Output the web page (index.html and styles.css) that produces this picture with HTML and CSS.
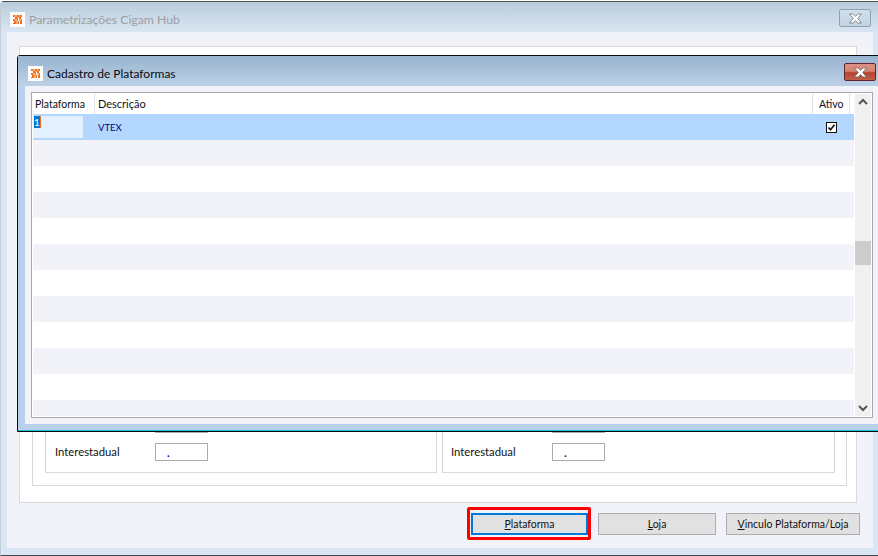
FILE: index.html
```html
<!DOCTYPE html>
<html lang="pt">
<head>
<meta charset="utf-8">
<title>Cadastro de Plataformas</title>
<link rel="stylesheet" href="styles.css">
</head>
<body>
<svg class="defs" width="0" height="0" aria-hidden="true">
  <symbol id="logo" viewBox="0 0 15 15">
    <rect width="15" height="15" fill="#fdfdfd"/>
    <path d="M3 3h2v2H3zM7 3h2v2H7zM10 3h2v2h-2zM5 5h2v2H5zM9 5h2v2H9zM3 7h2v2H3zM7 6h1v3H7zM11 7h1v2h-1zM4 9h2v3H4zM8 9h1v3H8zM10 9h2v3h-2zM3 11h1v1H3z" fill="#f2701e"/>
    <path d="M5 3h2v2H5zM9 3h1v2H9zM7 5h2v1H7zM5 7h2v2H5zM9 7h2v2H9zM6 9h2v3H6z" fill="#f9b27e"/>
  </symbol>
  <symbol id="closex" viewBox="0 0 15 11">
    <path d="M1.5 1h3.6L7.5 3.4 9.900 1h3.600L9.700 5.500l3.800 4.500H9.900L7.500 7.600 5.100 10H1.500l3.800-4.500z" fill="#fff" stroke="#59606a" stroke-width=".9" stroke-opacity=".75"/>
  </symbol>
</svg>

<section class="window back">
  <header class="back-title">
    <svg class="logo"><use href="#logo"/></svg>
    <span class="back-caption">Parametrizações Cigam Hub</span>
    <span class="close close-idle"><svg class="close-x"><use href="#closex"/></svg></span>
  </header>
  <div class="back-client">
    <div class="panel-a">
      <div class="panel-b">
        <div class="box">
          <div class="field"><span class="field-label"></span><span class="input"></span></div>
          <div class="field"><span class="field-label">Interestadual</span><span class="input">.</span></div>
        </div>
        <div class="box">
          <div class="field"><span class="field-label"></span><span class="input"></span></div>
          <div class="field"><span class="field-label">Interestadual</span><span class="input">.</span></div>
        </div>
      </div>
    </div>
    <div class="actions">
      <button class="btn btn-plataforma" type="button"><u>P</u>lataforma</button>
      <button class="btn btn-loja" type="button"><u>L</u>oja</button>
      <button class="btn btn-vinculo" type="button"><u>V</u>inculo Plataforma/Loja</button>
    </div>
  </div>
</section>

<section class="window front">
  <header class="front-title">
    <svg class="logo"><use href="#logo"/></svg>
    <span class="front-caption">Cadastro de Plataformas</span>
    <span class="close close-hot"><svg class="close-x"><use href="#closex"/></svg></span>
  </header>
  <div class="front-client">
    <div class="grid">
      <div class="table">
        <div class="thead">
          <span class="th th-plat">Plataforma</span>
          <span class="th th-desc">Descrição</span>
          <span class="th th-ativo">Ativo</span>
        </div>
        <div class="rows">
          <div class="row selected">
            <span class="cell-plat"><span class="cell-edit"><span class="sel">1</span></span></span>
            <span class="cell-desc">VTEX</span>
            <span class="cell-ativo">
              <svg class="check" viewBox="0 0 11 11"><rect x=".5" y=".5" width="10" height="10" fill="#fff" stroke="#111"/><path d="M2.500 5.500l2 2.200 4-5" fill="none" stroke="#111" stroke-width="1.700"/></svg>
            </span>
          </div>
          <div class="row alt"></div><div class="row"></div>
          <div class="row alt"></div><div class="row"></div>
          <div class="row alt"></div><div class="row"></div>
          <div class="row alt"></div><div class="row"></div>
          <div class="row alt"></div><div class="row"></div>
          <div class="row alt"></div>
        </div>
      </div>
      <div class="scrollbar">
        <svg class="arrow" viewBox="0 0 16 16"><path d="M4 10l4-4 4 4" fill="none" stroke="#555" stroke-width="2"/></svg>
        <div class="thumb"></div>
        <svg class="arrow arrow-down" viewBox="0 0 16 16"><path d="M4 6l4 4 4-4" fill="none" stroke="#555" stroke-width="2"/></svg>
      </div>
    </div>
  </div>
</section>
</body>
</html>
```
FILE: styles.css
```css
* { box-sizing: border-box; }
html, body { margin: 0; padding: 0; }
body {
  position: relative;
  width: 878px;
  height: 556px;
  overflow: hidden;
  background: #fff;
  font-family: Lato, "Open Sans", "Liberation Sans", sans-serif;
  font-size: 11px;
  color: #000;
}
.defs { position: absolute; }
.window { position: absolute; display: flex; flex-direction: column; }
.logo { display: block; width: 15px; height: 15px; flex: none; }

/* back window */
.back {
  left: 0; top: 1px; width: 878px; height: 555px;
  background: #d9e6f3;
  border-top: 1px solid #4d5154;
  border-bottom: 1px solid #44484c;
  border-left: 1px solid #c3ccd4;
  border-top-left-radius: 4px;
}
.back-title {
  display: flex; align-items: center; flex: none;
  height: 30px;
  padding: 5px 7px 0 9px;
  background: linear-gradient(#b9ccdc, #d9e6f2);
}
.back-caption { margin-left: 4px; font-size: 12.250px; color: #9c9fa3; flex: 1; }
.close {
  display: flex; align-items: center; justify-content: center;
  width: 32px; height: 18px; border-radius: 2px; flex: none;
}
.close-idle { border: 1px solid #8da2b6; background: linear-gradient(#d2dfe9, #c2d3e1); margin-top: -3px; }
.close-hot {
  border: 1px solid #5e2430;
  background: linear-gradient(#dc9184 0, #d58272 45%, #b5422c 55%, #c2604a 100%);
  margin-top: -3px;
}
.close-x { width: 15px; height: 11px; }
.back-client {
  flex: 1; display: flex; flex-direction: column; min-height: 0;
  margin: 0 5px 7px 6px;
  padding: 14px 13px 13px 12px;
  background: #f1f3f9;
}
.panel-a {
  flex: 1; display: flex; min-height: 0;
  margin-right: 3px;
  padding: 13px 9px 16px 12px;
  background: #fff;
  border: 1px solid #d9d9d9;
}
.panel-b {
  flex: 1; display: flex; gap: 5px;
  padding: 13px 11px 12px 12px;
  border: 1px solid #d9d9d9;
}
.box {
  display: flex; flex-direction: column; justify-content: flex-end; gap: 10px;
  padding: 0 9px 11px;
  border: 1px solid #d9d9d9;
}
.box:first-child { width: 392px; }
.box:last-child { width: 393px; padding-left: 8px; }
.box:last-child .field-label { width: 101px; }
.field { display: flex; align-items: center; }
.field-label { width: 100px; padding-bottom: 2px; font-size: 11.300px; color: #111; }
.input {
  display: block; width: 53px; height: 18px;
  padding-left: 11px;
  border: 1px solid #ababab;
  background: #fff;
  color: #0000c8; font-size: 11px; line-height: 17px; font-weight: 700;
}
.actions { display: flex; gap: 10px; justify-content: flex-end; margin-top: 10px; flex: none; }
.btn {
  height: 22px; padding: 0 0 1px;
  background: #e1e1e1; border: 1px solid #adadad;
  font: inherit; font-size: 10.500px; color: #111;
}
.btn-plataforma { position: relative; width: 117px; border: 2px solid #0078d7; }
.btn-plataforma::after {
  content: ""; position: absolute;
  inset: -8px -5px -7px -6px;
  border: 3px solid #f00; border-radius: 2px;
}
.btn-loja { width: 118px; }
.btn-vinculo { width: 134px; }

/* front window */
.front {
  left: 17px; top: 55px; width: 870px; height: 377px;
  background: #b9d0ea;
  border: 1px solid #0a0a0a;
  border-top-left-radius: 3px;
  padding-bottom: 7px;
}
.front::after {
  content: ""; position: absolute; left: 0; right: 0; bottom: 0; height: 1px;
  background: #1fc4e0;
}
.front-title {
  display: flex; align-items: center; flex: none;
  height: 30px; padding: 5px 10px 0 10px;
  background: linear-gradient(#98b4d0, #bdd1e6);
}
.front-caption { margin-left: 4px; font-size: 12px; color: #0b0b12; flex: 1; }
.front-client {
  flex: 1; display: flex; min-height: 0;
  margin: 0 7px 0 7px;
  padding: 6px;
  background: #f1f3f9;
}
.grid {
  flex: 1; display: flex; min-width: 0;
  padding: 0 1px 1px 1px;
  background: #fff;
  border: 1px solid #a9a9ae;
}
.table { width: 821px; display: flex; flex-direction: column; flex: none; }
.thead { display: flex; height: 21px; flex: none; }
.th { display: flex; align-items: center; padding-left: 3px; font-size: 11px; color: #101018; border-right: 1px solid #dfe3e8; }
.th-plat { width: 62px; padding-left: 2px; font-size: 10.500px; }
.th-desc { width: 718px; }
.th-ativo { width: 37px; padding-left: 6px; font-size: 10.500px; }
.rows { flex: 1; min-height: 0; overflow: hidden; }
.row { display: flex; height: 26px; background: #fff; }
.row.alt { background: #f1f3f9; }
.row.selected { background: #b3d7ff; align-items: center; }
.cell-plat { width: 62px; height: 26px; padding: 2px 12px 2px 0; flex: none; }
.cell-edit { display: block; height: 22px; background: #e3f1ff; padding-left: 1px; }
.sel {
  display: block; width: 7px; height: 12px;
  background: #0078d7; color: #fff;
  font-size: 10px; line-height: 12px; text-align: center;
  border-right: 1px solid #e8702a;
}
.cell-desc { width: 731px; padding-left: 3px; font-size: 9.500px; color: #000080; flex: none; }
.cell-ativo { display: flex; flex: 1; }
.check { display: block; width: 11px; height: 11px; }
.scrollbar {
  flex: 1; display: flex; flex-direction: column; align-items: center;
  margin: 1px 0 0 1px;
  background: #f0f0f0;
}
.arrow { display: block; width: 16px; height: 16px; flex: none; }
.thumb { width: 100%; height: 24px; margin-top: 131px; background: #cdcdcd; flex: none; }
.arrow-down { margin-top: auto; }
```
